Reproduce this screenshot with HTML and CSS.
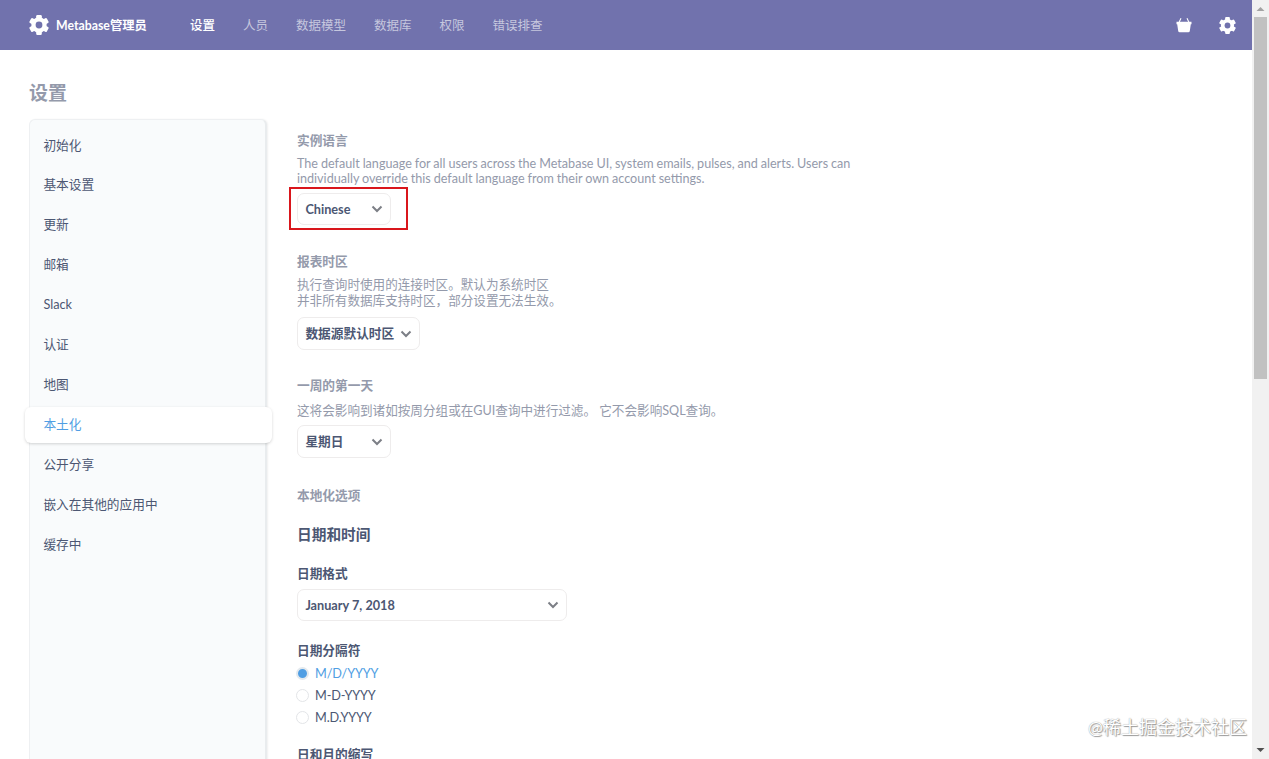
FILE: index.html
```html
<!DOCTYPE html>
<html lang="zh-CN">
<head>
    <meta charset="UTF-8">
    <meta name="viewport" content="width=device-width, initial-scale=1.0">
    <title>设置 · Metabase管理员</title>
    <link rel="stylesheet" href="styles.css">
</head>
<body>
    <svg class="defs" aria-hidden="true">
        <symbol id="gear" viewBox="0 0 20 20">
            <g fill="currentColor">
                <circle cx="10" cy="10" r="7.7"/>
                <rect x="7.2" y="0" width="5.6" height="20" rx="1.2"/>
                <rect x="7.2" y="0" width="5.6" height="20" rx="1.2" transform="rotate(60 10 10)"/>
                <rect x="7.2" y="0" width="5.6" height="20" rx="1.2" transform="rotate(120 10 10)"/>
            </g>
            <circle cx="10" cy="10" r="3.4" fill="#7172ad"/>
        </symbol>
        <symbol id="chevron" viewBox="0 0 12 8">
            <path d="M1.5 1.5 L6 6 L10.5 1.5" fill="none" stroke="currentColor" stroke-width="2"/>
        </symbol>
    </svg>

    <div class="window">
        <div class="page">
            <header class="navbar">
                <svg class="logo"><use href="#gear"/></svg>
                <strong class="brand">Metabase管理员</strong>
                <nav class="nav">
                    <a class="active">设置</a>
                    <a>人员</a>
                    <a>数据模型</a>
                    <a>数据库</a>
                    <a>权限</a>
                    <a>错误排查</a>
                </nav>
                <svg class="basket" viewBox="0 0 16 16">
                    <path d="M3.2 5 L5 1.2 M12.8 5 L11 1.2" fill="none" stroke="currentColor" stroke-width="1.1"/>
                    <path d="M.5 4.8h15v2.4h-.7l-1 6.8q-.2 1.3-1.5 1.3H3.7q-1.3 0-1.5-1.3l-1-6.8H.5z" fill="currentColor"/>
                </svg>
                <svg class="cog"><use href="#gear"/></svg>
            </header>

            <h1 class="page-title">设置</h1>

            <div class="layout">
                <ul class="sidebar">
                    <li>初始化</li>
                    <li>基本设置</li>
                    <li>更新</li>
                    <li>邮箱</li>
                    <li>Slack</li>
                    <li>认证</li>
                    <li>地图</li>
                    <li class="selected">本土化</li>
                    <li>公开分享</li>
                    <li>嵌入在其他的应用中</li>
                    <li>缓存中</li>
                </ul>

                <main class="content">
                    <section class="setting language">
                        <h2>实例语言</h2>
                        <p class="latin">The default language for all users across the Metabase UI, system emails, pulses, and alerts. Users can<br>individually override this default language from their own account settings.</p>
                        <div class="select">
                            <span>Chinese</span>
                            <svg><use href="#chevron"/></svg>
                            <div class="highlight"></div>
                        </div>
                    </section>

                    <section class="setting timezone">
                        <h2>报表时区</h2>
                        <p>执行查询时使用的连接时区。默认为系统时区<br>并非所有数据库支持时区，部分设置无法生效。</p>
                        <div class="select wide">
                            <span>数据源默认时区</span>
                            <svg><use href="#chevron"/></svg>
                        </div>
                    </section>

                    <section class="setting week">
                        <h2>一周的第一天</h2>
                        <p>这将会影响到诸如按周分组或在GUI查询中进行过滤。 它不会影响SQL查询。</p>
                        <div class="select">
                            <span>星期日</span>
                            <svg><use href="#chevron"/></svg>
                        </div>
                    </section>

                    <section class="formatting">
                        <h2>本地化选项</h2>
                        <h3>日期和时间</h3>
                        <h4>日期格式</h4>
                        <div class="select full">
                            <span>January 7, 2018</span>
                            <svg><use href="#chevron"/></svg>
                        </div>
                        <h4 class="separator">日期分隔符</h4>
                        <ul class="radios">
                            <li class="checked"><i></i>M/D/YYYY</li>
                            <li><i></i>M-D-YYYY</li>
                            <li><i></i>M.D.YYYY</li>
                        </ul>
                        <h4 class="abbreviate">日和月的缩写</h4>
                    </section>
                </main>
            </div>
        </div>

        <div class="scrollbar">
            <svg viewBox="0 0 17 17"><path d="M4.5 11h8L8.5 7z" fill="#a3a3a3"/></svg>
            <div class="thumb"></div>
            <svg class="down" viewBox="0 0 17 17"><path d="M4.5 6h8L8.5 10z" fill="#505050"/></svg>
        </div>
    </div>
    <div class="watermark">@稀土掘金技术社区</div>
</body>
</html>
```
FILE: styles.css
```css
* {
    box-sizing: border-box;
    margin: 0;
    padding: 0;
}

body {
    height: 759px;
    overflow: hidden;
    background: #fff;
    color: #4c5773;
    font-family: Lato, "Noto Sans CJK SC", sans-serif;
    font-size: 12.7px;
}

ul {
    list-style: none;
}

.defs {
    position: absolute;
    width: 0;
    height: 0;
}

.window {
    display: flex;
    height: 759px;
}

.page {
    flex: 1;
    height: 759px;
    overflow: hidden;
}

/* Top bar */
.navbar {
    display: flex;
    align-items: center;
    height: 50px;
    padding: 0 16px 0 29px;
    background: #7172ad;
    color: #fff;
}

.logo {
    width: 20px;
    height: 20px;
    margin-right: 7px;
}

.brand {
    width: 134px;
    font-size: 12.3px;
}

.nav {
    display: flex;
    flex: 1;
    gap: 28px;
    padding-bottom: 1px;
    font-size: 12.5px;
}

.nav a {
    color: #c6c7de;
}

.nav .active {
    color: #fff;
    font-weight: 500;
}

.basket {
    width: 16px;
    height: 16px;
    margin-right: 27px;
}

.cog {
    width: 17px;
    height: 17px;
}

.page-title {
    height: 69px;
    padding: 28px 0 0 29px;
    color: #949aab;
    font-size: 19px;
    line-height: 30px;
}

.layout {
    display: flex;
    align-items: flex-start;
    padding-left: 29px;
}

/* Left menu */
.sidebar {
    width: 238px;
    height: 660px;
    margin-right: 30px;
    padding-top: 7.6px;
    border: 1px solid #eef0f2;
    border-right: 2px solid #e9ecee;
    border-radius: 6px;
    background: #f9fbfc;
    box-shadow: 1px 0 2px rgba(0, 0, 0, 0.06);
}

.sidebar li {
    height: 35.9px;
    margin-bottom: 4px;
    padding-left: 13.4px;
    line-height: 35.9px;
}

.sidebar .selected {
    margin-right: -7px;
    margin-left: -5px;
    padding-left: 18.4px;
    border-radius: 6px;
    background: #fff;
    box-shadow: 0 1px 3px rgba(0, 0, 0, 0.17);
    color: #509ee3;
}

/* Settings */
.content {
    flex: 1;
    padding-top: 11px;
}

.content h2,
.content h4 {
    font-size: 12.7px;
    font-weight: 700;
    line-height: 20px;
}

.content h2,
.content p {
    color: #949aab;
}

.content p {
    margin: 6px 0 8px;
    font-size: 12.6px;
    line-height: 16px;
}

.content .latin {
    margin-bottom: 7px;
    line-height: 15px;
    word-spacing: -0.3px;
}

.language {
    margin-bottom: 26px;
}

.timezone {
    margin-bottom: 25px;
}

.week {
    margin-bottom: 27px;
}

.week p {
    margin: 8px 0 6px;
}

.select {
    position: relative;
    display: flex;
    align-items: center;
    justify-content: space-between;
    width: 94px;
    height: 33px;
    padding: 0 7px 0 7.4px;
    border: 1px solid #eeecec;
    border-radius: 7px;
    font-weight: 700;
}

.timezone .select span,
.week .select span {
    padding-bottom: 2px;
}

.language .select,
.select.full {
    height: 32px;
}

.select.wide {
    width: 123px;
}

.select.full {
    width: 270px;
}

.select svg {
    width: 12px;
    height: 8px;
    color: #7c7f86;
}

.highlight {
    position: absolute;
    top: -7px;
    left: -9px;
    width: 119px;
    height: 43px;
    border: 2px solid #d9161c;
}

.formatting h3 {
    margin: 19px 0;
    font-size: 14.7px;
    line-height: 20px;
}

.formatting .select {
    margin-top: 6px;
}

.content .separator {
    margin-top: 19px;
}

.radios {
    margin: 2px 0 16px -1px;
}

.radios li {
    display: flex;
    align-items: center;
    height: 22px;
    letter-spacing: -0.15px;
}

.radios i {
    width: 13px;
    height: 13px;
    margin-right: 6px;
    border: 1px solid #e3e5e8;
    border-radius: 50%;
}

.radios .checked {
    color: #509ee3;
}

.radios .checked i {
    border: 2px solid #e3e9ee;
    background: #509ee3;
}

/* Window scrollbar */
.scrollbar {
    display: flex;
    flex-direction: column;
    width: 17px;
    background: #f1f1f1;
}

.scrollbar svg {
    width: 17px;
    height: 17px;
}

.thumb {
    width: 13px;
    height: 362px;
    margin: 0 2px;
    background: #c1c1c1;
}

.down {
    margin-top: auto;
}

.watermark {
    position: absolute;
    right: 22px;
    bottom: 18px;
    color: #fff;
    font-size: 18px;
    line-height: 28px;
    text-shadow: 0 0 1px #888, 1px 1px 1px #999;
}
```
